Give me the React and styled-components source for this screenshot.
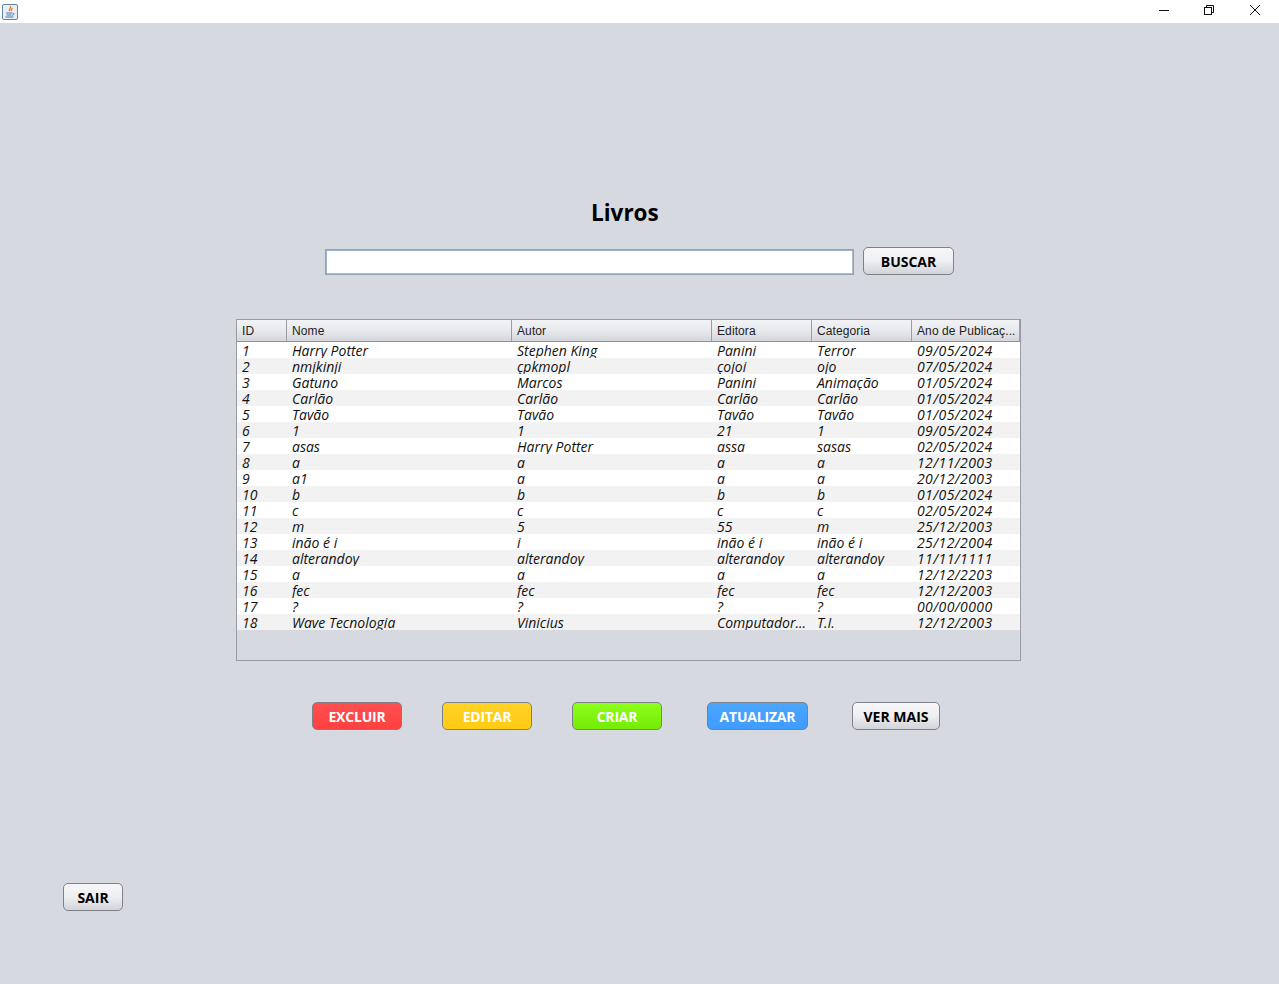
import React from "react";
import styled, { createGlobalStyle } from "styled-components";

const columns = [
  { label: "ID", width: 50 },
  { label: "Nome", width: 225 },
  { label: "Autor", width: 200 },
  { label: "Editora", width: 100 },
  { label: "Categoria", width: 100 },
  { label: "Ano de Publicaç...", width: 108 },
];

const books = [
  ["1", "Harry Potter", "Stephen King", "Panini", "Terror", "09/05/2024"],
  ["2", "nmjkinji", "çpkmopl", "çojoi", "ojo", "07/05/2024"],
  ["3", "Gatuno", "Marcos", "Panini", "Animação", "01/05/2024"],
  ["4", "Carlão", "Carlão", "Carlão", "Carlão", "01/05/2024"],
  ["5", "Tavão", "Tavão", "Tavão", "Tavão", "01/05/2024"],
  ["6", "1", "1", "21", "1", "09/05/2024"],
  ["7", "asas", "Harry Potter", "assa", "sasas", "02/05/2024"],
  ["8", "a", "a", "a", "a", "12/11/2003"],
  ["9", "a1", "a", "a", "a", "20/12/2003"],
  ["10", "b", "b", "b", "b", "01/05/2024"],
  ["11", "c", "c", "c", "c", "02/05/2024"],
  ["12", "m", "5", "55", "m", "25/12/2003"],
  ["13", "inão é i", "i", "inão é i", "inão é i", "25/12/2004"],
  ["14", "alterandoy", "alterandoy", "alterandoy", "alterandoy", "11/11/1111"],
  ["15", "a", "a", "a", "a", "12/12/2203"],
  ["16", "fec", "fec", "fec", "fec", "12/12/2003"],
  ["17", "?", "?", "?", "?", "00/00/0000"],
  ["18", "Wave Tecnologia", "Vinicius", "Computador...", "T.I.", "12/12/2003"],
];

const actions = [
  { label: "EXCLUIR", width: 90, top: "#ff5050", bottom: "#ff4040", gap: 40 },
  { label: "EDITAR", width: 90, top: "#ffd226", bottom: "#ffcb14", gap: 40 },
  { label: "CRIAR", width: 90, top: "#8cff1a", bottom: "#76ea08", gap: 45 },
  { label: "ATUALIZAR", width: 101, top: "#4ba6ff", bottom: "#3f9cff", gap: 44 },
];

const GlobalStyle = createGlobalStyle`
  html, body {
    margin: 0;
    background: #d6d9e0;
  }
`;

const Page = styled.div`
  min-height: 984px;
  display: flex;
  flex-direction: column;
  font-family: "Open Sans", "Noto Sans", sans-serif;
`;

const TitleBar = styled.div`
  height: 23px;
  background: #fff;
  display: flex;
  align-items: center;
  justify-content: space-between;
  padding: 0 19px 0 2px;
`;

const WindowControls = styled.div`
  display: flex;
  align-items: center;
  margin-top: -3px;
`;

const WindowControl = styled.div`
  width: 10px;
  height: 10px;
  margin-left: ${(p) => p.$gap || 0}px;
  display: flex;
`;

const Heading = styled.h1`
  margin: 176px 0 0 591px;
  height: 28px;
  font-size: 22.5px;
  line-height: 28px;
  font-weight: 700;
  color: #000;
`;

const SearchRow = styled.div`
  display: flex;
  align-items: flex-end;
  gap: 9px;
  margin: 20px 0 0 325px;
`;

const SearchInput = styled.input`
  box-sizing: border-box;
  width: 529px;
  height: 26px;
  background: #fff;
  border: 1px solid #7fa5d2;
  border-bottom-color: #94a4b8;
  box-shadow: inset 1px 1px 0 #9db2cc, inset -1px -1px 0 #aeb8c6;
  outline: none;
`;

const Button = styled.button`
  box-sizing: border-box;
  width: ${(p) => p.$width}px;
  height: 28px;
  margin-right: ${(p) => p.$gap || 0}px;
  padding: 0;
  border-radius: 5px;
  border: 1px solid #7e8188;
  background: ${(p) =>
    p.$top
      ? `linear-gradient(${p.$top}, ${p.$bottom})`
      : "linear-gradient(#f7f7f9, #eeeff2 50%, #d2d4da)"};
  color: ${(p) => (p.$top ? "#fff" : "#000")};
  font-family: "Open Sans", "Noto Sans", sans-serif;
  font-size: 14px;
  font-weight: 700;
  line-height: 28px;
  letter-spacing: ${(p) => (p.$top ? "-0.2px" : "0")};
`;

const TablePanel = styled.div`
  box-sizing: border-box;
  width: 785px;
  height: 342px;
  margin: 44px 0 0 236px;
  border: 1px solid #989ba4;
  overflow: hidden;
`;

const HeaderRow = styled.div`
  display: flex;
  height: 22px;
  box-sizing: border-box;
  border-bottom: 1px solid #8e9198;
  background: linear-gradient(#f2f3f5, #e8e9ed 50%, #d4d6dc);
`;

const HeaderCell = styled.div`
  box-sizing: border-box;
  width: ${(p) => p.$width}px;
  padding-left: 5px;
  border-right: 1px solid #9a9da5;
  font-family: "Liberation Sans", Arial, sans-serif;
  font-size: 12px;
  letter-spacing: 0.1px;
  line-height: 23px;
  color: #222;
  white-space: nowrap;
  overflow: hidden;
`;

const Rows = styled.div`
  width: 783px;
`;

const Row = styled.div`
  display: flex;
  height: 16px;
  background: ${(p) => (p.$striped ? "#f2f2f2" : "#fff")};
`;

const Cell = styled.div`
  box-sizing: border-box;
  width: ${(p) => p.$width}px;
  height: 16px;
  padding-left: 5px;
  font-size: 14px;
  font-style: italic;
  letter-spacing: ${(p) => (p.$date ? "0.4px" : "0")};
  line-height: 17px;
  color: #111;
  white-space: nowrap;
  overflow: hidden;
`;

const ActionRow = styled.div`
  display: flex;
  margin: 41px 0 0 312px;
`;

const ExitRow = styled.div`
  margin: 153px 0 0 63px;
`;

const JavaIcon = () => (
  <svg width="16" height="16" viewBox="0 0 16 16">
    <rect x="0.5" y="0.5" width="15" height="15" rx="1.5" fill="#e9eff6" stroke="#5d84aa" />
    <path d="M8.5 2c1 2-2 3-1 5M10 4c.6 1.5-1.5 2-.8 3" fill="none" stroke="#e8761e" strokeWidth="1.3" />
    <path d="M4 9h6M4.5 11h5M3.5 13h8" stroke="#4f7ca8" strokeWidth="1.1" />
    <path d="M10.5 9.2c2.2-.4 2.2 2-.6 2" fill="none" stroke="#4f7ca8" />
  </svg>
);

const App = () => (
  <Page>
    <GlobalStyle />
    <TitleBar>
      <JavaIcon />
      <WindowControls>
        <WindowControl>
          <svg width="10" height="10" viewBox="0 0 10 10">
            <path d="M0 5.5h10" stroke="#111" />
          </svg>
        </WindowControl>
        <WindowControl $gap={35}>
          <svg width="10" height="10" viewBox="0 0 10 10" fill="none" stroke="#111">
            <rect x="0.5" y="2.5" width="7" height="7" />
            <path d="M2.5 2.5v-2h7v7h-2" />
          </svg>
        </WindowControl>
        <WindowControl $gap={36}>
          <svg width="10" height="10" viewBox="0 0 10 10" stroke="#111">
            <path d="M0 0l10 10M10 0L0 10" />
          </svg>
        </WindowControl>
      </WindowControls>
    </TitleBar>

    <Heading>Livros</Heading>

    <SearchRow>
      <SearchInput />
      <Button $width={91}>BUSCAR</Button>
    </SearchRow>

    <TablePanel>
      <HeaderRow>
        {columns.map((col) => (
          <HeaderCell key={col.label} $width={col.width}>
            {col.label}
          </HeaderCell>
        ))}
      </HeaderRow>
      <Rows>
        {books.map((book, i) => (
          <Row key={book[0]} $striped={i % 2 === 1}>
            {book.map((value, c) => (
              <Cell key={c} $width={columns[c].width} $date={c === 5}>
                {value}
              </Cell>
            ))}
          </Row>
        ))}
      </Rows>
    </TablePanel>

    <ActionRow>
      {actions.map((a) => (
        <Button key={a.label} $width={a.width} $top={a.top} $bottom={a.bottom} $gap={a.gap}>
          {a.label}
        </Button>
      ))}
      <Button $width={88}>VER MAIS</Button>
    </ActionRow>

    <ExitRow>
      <Button $width={60}>SAIR</Button>
    </ExitRow>
  </Page>
);

export default App;
